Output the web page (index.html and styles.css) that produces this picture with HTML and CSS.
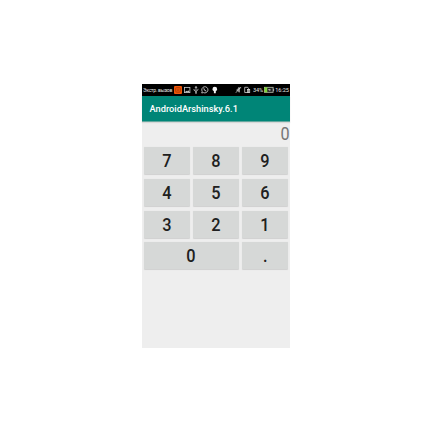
FILE: index.html
```html
<!DOCTYPE html>
<html lang="ru">
<head>
<meta charset="utf-8">
<title>AndroidArshinsky.6.1</title>
<link rel="stylesheet" href="styles.css">
</head>
<body>
<main class="phone">
  <div class="status">
    <svg class="label carrier" viewBox="0 0 31 12"><text x="0" y="7.7" textLength="29.3">Экстр. вызов</text></svg>
    <svg class="app" viewBox="0 0 9 12"><rect x="0" y="1.9" width="8" height="8.1" rx="1" fill="#ef5608"/><rect x="1.6" y="3.6" width="4.8" height="4.6" rx="1.2" fill="none" stroke="#a83800" stroke-width=".8"/><circle cx="4" cy="5.9" r="1" fill="none" stroke="#a83800" stroke-width=".6"/></svg>
    <svg class="picture" viewBox="0 0 7 12"><rect x=".5" y="3.4" width="5.4" height="5.2" fill="none" stroke="#c8c8c8" stroke-width=".8"/><path d="M1 8.3l1.2-1.5 1 .6 1-1.1 1.5 2z" fill="#d0d0d0"/></svg>
    <svg class="usb" viewBox="0 0 6 12"><path d="M3 9V2.5M2 4l1-1.5L4 4M1 5v1.2l2 1.4 2-1.8V4.8" fill="none" stroke="#d0d0d0" stroke-width=".75"/><circle cx="3" cy="9" r=".8" fill="#d0d0d0"/></svg>
    <svg class="chat" viewBox="0 0 8 12"><path d="M.7 9l.5-1.6A3.1 3.1 0 1 1 2.5 8.6z" fill="none" stroke="#dcdcdc" stroke-width=".8"/><path d="M2.8 4.3q.1 2.4 2.6 2.9" fill="none" stroke="#dcdcdc" stroke-width=".9"/></svg>
    <svg class="debug" viewBox="0 0 6 12"><path d="M.5 5A2.2 2.1 0 0 1 5.1 5v1L3.8 7.2v2H1.9v-2L.5 6z" fill="#f4f4f4"/></svg>
    <svg class="mute" viewBox="0 0 7 12"><path d="M1.5 5.6L4 3.4v5L2.5 7h-1z" fill="#888"/><path d="M.8 8.8L5.6 3.2M3 3.9h3.2M4.4 4v4.4" stroke="#ddd" stroke-width=".7"/></svg>
    <svg class="sim" viewBox="0 0 7 12"><path d="M.7 8.5V3.3h3l.8 1v4.2z" fill="none" stroke="#d0d0d0" stroke-width=".8"/><rect x="3" y="5" width="3.1" height="3.9" fill="#d0d0d0"/><path d="M3.9 6v2M5.2 6v2" stroke="#333" stroke-width=".5"/></svg>
    <svg class="label percent" viewBox="0 0 11 12"><text x="0" y="7.9" textLength="10.2">34%</text></svg>
    <svg class="battery" viewBox="0 0 11 12"><rect x=".5" y="3.3" width="8.6" height="5" fill="#222" stroke="#bdc6b4" stroke-width=".8"/><path d="M.5 3.3h2.8v5H.5z" fill="#7fd336"/><path d="M9.2 4.7h.9v2.2h-.9z" fill="#bbb"/><path d="M3.8 6l1.7-1.3v.8l1.7.2-1.7 1.2v-.7z" fill="#ddd"/></svg>
    <svg class="label clock" viewBox="0 0 15 12"><text x=".3" y="7.9" textLength="13.6">16:25</text></svg>
  </div>
  <header class="bar">AndroidArshinsky.6.1</header>
  <output class="display"><span class="digit">0</span></output>
  <div class="keys">
    <button><span class="digit">7</span></button>
    <button><span class="digit">8</span></button>
    <button><span class="digit">9</span></button>
    <button><span class="digit">4</span></button>
    <button><span class="digit">5</span></button>
    <button><span class="digit">6</span></button>
    <button><span class="digit">3</span></button>
    <button><span class="digit">2</span></button>
    <button><span class="digit">1</span></button>
    <button class="wide"><span class="digit">0</span></button>
    <button><span class="digit">.</span></button>
  </div>
</main>
</body>
</html>
```
FILE: styles.css
```css
body {
  margin: 0;
  background: #fff;
  font-family: Roboto, sans-serif;
}
.phone {
  width: 148px;
  height: 264px;
  margin: 84px 0 0 142px;
  background: #eee;
}
.status {
  display: flex;
  height: 12px;
  background: #000;
}
.status svg {
  flex: none;
  height: 12px;
}
.label text {
  fill: #e4e4e4;
  font-size: 5.6px;
}
.carrier { width: 31px; margin-left: 1px; }
.carrier text { font-size: 5px; }
.app { width: 9px; }
.picture { width: 7px; margin-left: 1px; }
.usb { width: 6px; margin-left: 2px; }
.chat { width: 8px; margin-left: 2px; }
.debug { width: 6px; margin-left: 3px; }
.mute { width: 7px; margin-left: 17px; }
.sim { width: 7px; margin-left: 2px; }
.percent { width: 11px; margin-left: 2px; }
.battery { width: 11px; }
.clock { width: 15px; }
.bar {
  height: 25px;
  padding-left: 7.5px;
  border-bottom: 1px solid #64a89f;
  background: #008577;
  box-shadow: 0 1px 1px #d8d8d8;
  color: #fff;
  font-size: 9.25px;
  font-weight: 500;
  line-height: 25px;
}
.display {
  display: block;
  height: 25px;
  color: #757575;
  font-size: 17px;
  line-height: 24px;
  text-align: right;
}
.digit {
  display: inline-block;
  transform: translateY(1px) scale(.96, 1.04);
}
.display .digit {
  transform: scale(.95, 1.05);
  transform-origin: right center;
}
.keys {
  display: grid;
  grid-template-columns: repeat(3, 46.3px);
  grid-auto-rows: 27px;
  gap: 4.8px 3px;
  padding-left: 1.5px;
}
.keys button {
  padding: 0;
  border: 0;
  border-radius: 1px;
  background: #d6d8d7;
  box-shadow: 0 .3px .8px #d0d0d0;
  color: #202020;
  font: 500 17px/27px Roboto, sans-serif;
}
.keys .wide {
  grid-column: span 2;
}
```
